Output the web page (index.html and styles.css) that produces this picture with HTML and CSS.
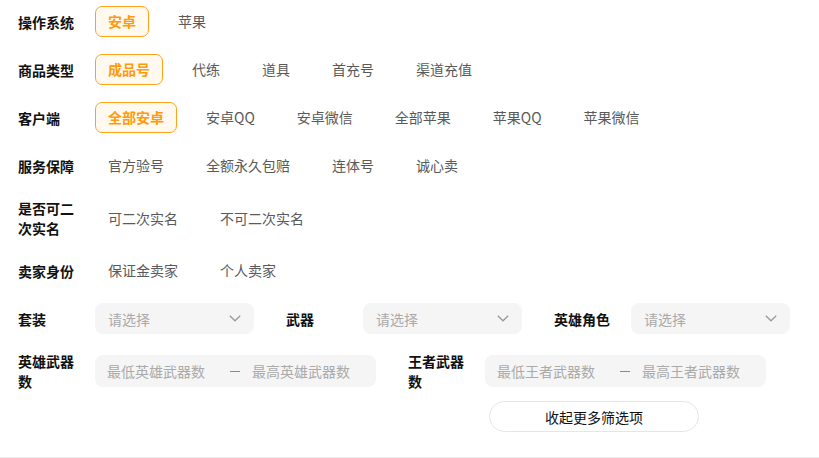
FILE: index.html
```html
<!DOCTYPE html>
<html lang="zh-CN">
<head>
    <meta charset="UTF-8">
    <meta name="viewport" content="width=device-width, initial-scale=1.0">
    <title>筛选</title>
    <link rel="stylesheet" href="styles.css">
</head>
<body>
    <section class="filter-panel">
        <div class="filter-row">
            <div class="filter-label">操作系统</div>
            <div class="option-list">
                <span class="option active">安卓</span>
                <span class="option">苹果</span>
            </div>
        </div>
        <div class="filter-row">
            <div class="filter-label">商品类型</div>
            <div class="option-list">
                <span class="option active">成品号</span>
                <span class="option">代练</span>
                <span class="option">道具</span>
                <span class="option">首充号</span>
                <span class="option">渠道充值</span>
            </div>
        </div>
        <div class="filter-row">
            <div class="filter-label">客户端</div>
            <div class="option-list">
                <span class="option active">全部安卓</span>
                <span class="option">安卓QQ</span>
                <span class="option">安卓微信</span>
                <span class="option">全部苹果</span>
                <span class="option">苹果QQ</span>
                <span class="option">苹果微信</span>
            </div>
        </div>
        <div class="filter-row">
            <div class="filter-label">服务保障</div>
            <div class="option-list">
                <span class="option">官方验号</span>
                <span class="option">全额永久包赔</span>
                <span class="option">连体号</span>
                <span class="option">诚心卖</span>
            </div>
        </div>
        <div class="filter-row">
            <div class="filter-label">是否可二次实名</div>
            <div class="option-list">
                <span class="option">可二次实名</span>
                <span class="option">不可二次实名</span>
            </div>
        </div>
        <div class="filter-row">
            <div class="filter-label">卖家身份</div>
            <div class="option-list">
                <span class="option">保证金卖家</span>
                <span class="option">个人卖家</span>
            </div>
        </div>

        <!-- dropdown filters -->
        <div class="filter-row field-row">
            <div class="field-group">
                <div class="filter-label">套装</div>
                <div class="select-box">
                    <span>请选择</span>
                    <svg class="chevron" viewBox="0 0 12 7"><path d="M0.8 0.8 L6 5.8 L11.2 0.8"/></svg>
                </div>
            </div>
            <div class="field-group">
                <div class="filter-label">武器</div>
                <div class="select-box">
                    <span>请选择</span>
                    <svg class="chevron" viewBox="0 0 12 7"><path d="M0.8 0.8 L6 5.8 L11.2 0.8"/></svg>
                </div>
            </div>
            <div class="field-group">
                <div class="filter-label">英雄角色</div>
                <div class="select-box">
                    <span>请选择</span>
                    <svg class="chevron" viewBox="0 0 12 7"><path d="M0.8 0.8 L6 5.8 L11.2 0.8"/></svg>
                </div>
            </div>
        </div>

        <!-- range filters -->
        <div class="filter-row field-row">
            <div class="field-group">
                <div class="filter-label">英雄武器数</div>
                <div class="range-box">
                    <span class="range-input">最低英雄武器数</span>
                    <span class="range-dash"></span>
                    <span class="range-input">最高英雄武器数</span>
                </div>
            </div>
            <div class="field-group">
                <div class="filter-label">王者武器数</div>
                <div class="range-box">
                    <span class="range-input">最低王者武器数</span>
                    <span class="range-dash"></span>
                    <span class="range-input">最高王者武器数</span>
                </div>
            </div>
        </div>

        <div class="toggle-row">
            <button class="toggle-more">收起更多筛选项</button>
        </div>
    </section>
</body>
</html>
```

FILE: styles.css
```css
/* General */
body {
    margin: 0;
    padding: 0;
    background: #fff;
    font-family: 'Noto Sans CJK SC', 'Noto Sans', sans-serif;
    font-size: 14px;
    color: #333;
}

/* Filter panel */
.filter-panel {
    padding: 6px 0 25px 18px;
    border-bottom: 1px solid #eeeeee;
}

.filter-row {
    display: flex;
    align-items: center;
    min-height: 31px;
    margin-bottom: 17px;
}

.filter-label {
    width: 60px;
    margin-right: 17px;
    flex-shrink: 0;
    font-weight: bold;
    line-height: 20px;
    color: #111;
}

.option-list {
    display: flex;
    align-items: center;
    gap: 16px;
}

.option {
    height: 29px;
    line-height: 29px;
    padding: 0 12px;
    border: 1px solid transparent;
    border-radius: 7px;
    color: #5a5a5a;
}

.option.active {
    border-color: #ffa21a;
    background: #fff9f0;
    color: #ff9a0a;
    font-weight: bold;
}

/* Select + range fields */
.field-row {
    gap: 32px;
}

.field-group {
    display: flex;
    align-items: center;
}

.select-box {
    width: 159px;
    height: 31px;
    box-sizing: border-box;
    padding: 0 13px 0 13px;
    display: flex;
    align-items: center;
    justify-content: space-between;
    background: #f5f5f5;
    border-radius: 8px;
    color: #aaa;
}

.chevron {
    width: 12px;
    height: 7px;
    fill: none;
    stroke: #999;
    stroke-width: 1.3;
}

.range-box {
    width: 281px;
    height: 32px;
    box-sizing: border-box;
    padding-left: 12px;
    display: flex;
    align-items: center;
    background: #f5f5f5;
    border-radius: 8px;
    color: #aaa;
}

.range-input {
    width: 111px;
    white-space: nowrap;
}

.range-input:last-child {
    width: auto;
}

.range-dash {
    width: 10px;
    height: 1px;
    margin: 0 12px;
    background: #888;
}

/* Collapse button */
.toggle-row {
    display: flex;
    padding-left: 471px;
    margin-top: -7px;
}

.toggle-more {
    width: 210px;
    height: 31px;
    border: 1px solid #e6e6e6;
    border-radius: 16px;
    background: #fff;
    font-family: inherit;
    font-size: 14px;
    color: #111;
    cursor: pointer;
}
```
